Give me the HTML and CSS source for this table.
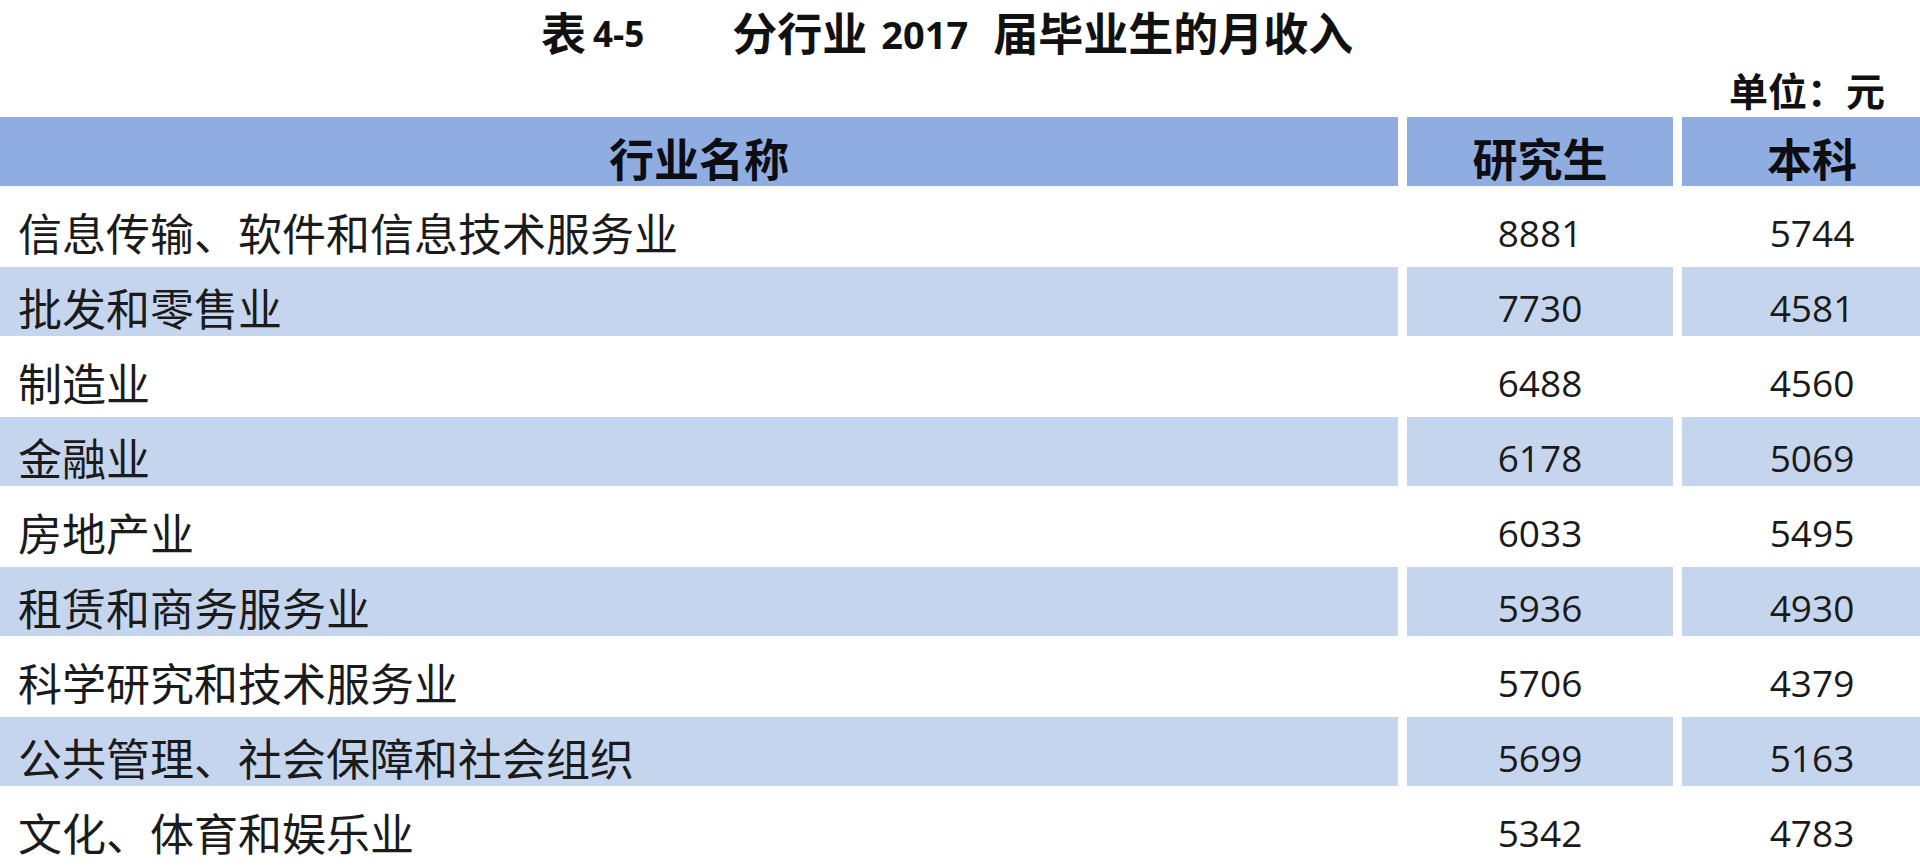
FILE: index.html
```html
<!DOCTYPE html>
<html lang="zh-CN">
<head>
<meta charset="utf-8">
<title>表4-5 分行业2017届毕业生的月收入</title>
<link rel="stylesheet" href="styles.css">
</head>
<body>
<div class="page">
  <div class="title">
    <span class="t-label">表</span><span class="t-num">4-5</span>
    <span class="t-main">分行业</span><span class="t-num t-year">2017</span><span class="t-main">届毕业生的月收入</span>
  </div>
  <div class="unit">单位：元</div>
  <div class="table">
    <div class="row head">
      <div class="cell name">行业名称</div>
      <div class="cell val">研究生</div>
      <div class="cell val last">本科</div>
    </div>
    <div class="row">
      <div class="cell name">信息传输、软件和信息技术服务业</div>
      <div class="cell val">8881</div>
      <div class="cell val last">5744</div>
    </div>
    <div class="row alt">
      <div class="cell name">批发和零售业</div>
      <div class="cell val">7730</div>
      <div class="cell val last">4581</div>
    </div>
    <div class="row">
      <div class="cell name">制造业</div>
      <div class="cell val">6488</div>
      <div class="cell val last">4560</div>
    </div>
    <div class="row alt">
      <div class="cell name">金融业</div>
      <div class="cell val">6178</div>
      <div class="cell val last">5069</div>
    </div>
    <div class="row">
      <div class="cell name">房地产业</div>
      <div class="cell val">6033</div>
      <div class="cell val last">5495</div>
    </div>
    <div class="row alt">
      <div class="cell name">租赁和商务服务业</div>
      <div class="cell val">5936</div>
      <div class="cell val last">4930</div>
    </div>
    <div class="row">
      <div class="cell name">科学研究和技术服务业</div>
      <div class="cell val">5706</div>
      <div class="cell val last">4379</div>
    </div>
    <div class="row alt">
      <div class="cell name">公共管理、社会保障和社会组织</div>
      <div class="cell val">5699</div>
      <div class="cell val last">5163</div>
    </div>
    <div class="row">
      <div class="cell name">文化、体育和娱乐业</div>
      <div class="cell val">5342</div>
      <div class="cell val last">4783</div>
    </div>
  </div>
</div>
</body>
</html>
```

FILE: styles.css
```css
html, body {
  margin: 0;
  padding: 0;
  background: #ffffff;
  overflow: hidden;
}

.page {
  width: 1942px;
  color: #111111;
  font-family: "Noto Sans CJK SC", "Noto Sans", sans-serif;
}

.title {
  height: 64px;
  display: flex;
  align-items: center;
  padding-left: 541px;
  font-weight: 700;
  white-space: nowrap;
}

.t-label,
.t-main {
  font-size: 45px;
  line-height: 64px;
  font-weight: 700;
}

.t-num {
  font-family: "Open Sans", "Liberation Sans", sans-serif;
  font-size: 35px;
  font-weight: 700;
  line-height: 64px;
  margin-left: 7px;
  margin-right: 88px;
  padding-top: 4px;
}

.t-year {
  font-size: 38px;
  margin-left: 14px;
  margin-right: 25px;
}

.unit {
  height: 50px;
  width: 1920px;
  box-sizing: border-box;
  padding-right: 35px;
  text-align: right;
  font-size: 39px;
  font-weight: 700;
  line-height: 50px;
}

.table {
  display: flex;
  flex-direction: column;
}

.row {
  display: grid;
  grid-template-columns: 1398px 266px 260px;
  column-gap: 9px;
  padding: 3px 0;
  height: 75px;
  box-sizing: border-box;
}

.cell {
  display: flex;
  align-items: center;
  box-sizing: border-box;
  padding-top: 11px;
  font-size: 44px;
  line-height: 1;
  white-space: nowrap;
}

.name {
  padding-left: 18px;
  font-weight: 400;
  color: #1b1b1b;
}

.val {
  justify-content: center;
  font-family: "Open Sans", "Liberation Sans", sans-serif;
  font-size: 37px;
  color: #1a1a1a;
}

.row.alt .cell {
  background: #c6d5ee;
}

.row.head .cell {
  background: #8fade0;
  justify-content: center;
  padding-left: 0;
  font-family: "Noto Sans CJK SC", "Noto Sans", sans-serif;
  font-size: 45px;
  font-weight: 700;
  color: #0d0d14;
}
```
